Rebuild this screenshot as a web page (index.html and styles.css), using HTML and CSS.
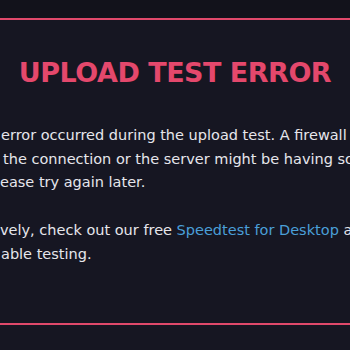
FILE: index.html
```html
<!DOCTYPE html>
<html>
<head>
<meta charset="utf-8">
<link rel="stylesheet" href="styles.css">
</head>
<body>
<div class="page">
  <section class="card">
    <h1 class="title">UPLOAD TEST ERROR</h1>
    <div class="body">
      <p class="para">
        <span class="line l1">error occurred during the upload test. A firewall</span>
        <span class="line l2">the connection or the server might be having so</span>
        <span class="line l3">ease try again later.</span>
      </p>
      <p class="para">
        <span class="line l4">vely, check out our free <a class="link" href="#">Speedtest for Desktop</a> ap</span>
        <span class="line l5">able testing.</span>
      </p>
    </div>
  </section>
</div>
</body>
</html>
```
FILE: styles.css
```css
html, body {
  margin: 0;
  padding: 0;
  width: 350px;
  height: 350px;
  overflow: hidden;
  background: #161622;
}
.page {
  padding-top: 18px;
  background: linear-gradient(#12121b 0, #12121b 18px, #161622 18px);
  height: 350px;
  box-sizing: border-box;
}
.card {
  border-top: 2px solid #e0496b;
  border-bottom: 2px solid #e0496b;
  height: 307px;
  box-sizing: border-box;
  display: flex;
  flex-direction: column;
}
.title {
  margin: 0;
  padding-top: 37px;
  font-family: "DejaVu Sans", sans-serif;
  font-weight: bold;
  font-size: 27px;
  line-height: 32px;
  color: #e4486c;
  text-align: center;
  letter-spacing: -0.5px;
}
.body {
  padding-top: 35px;
  font-family: "DejaVu Sans", sans-serif;
  font-size: 14.5px;
  line-height: 23.7px;
  color: #e6e6ec;
}
.para {
  margin: 0 0 24px 0;
}
.line {
  display: block;
  white-space: nowrap;
}
.l1 { padding-left: 1px; }
.l2 { padding-left: 3px; }
.l5 { padding-left: 1px; }
.link {
  color: #4a9fd8;
  text-decoration: none;
}
```
